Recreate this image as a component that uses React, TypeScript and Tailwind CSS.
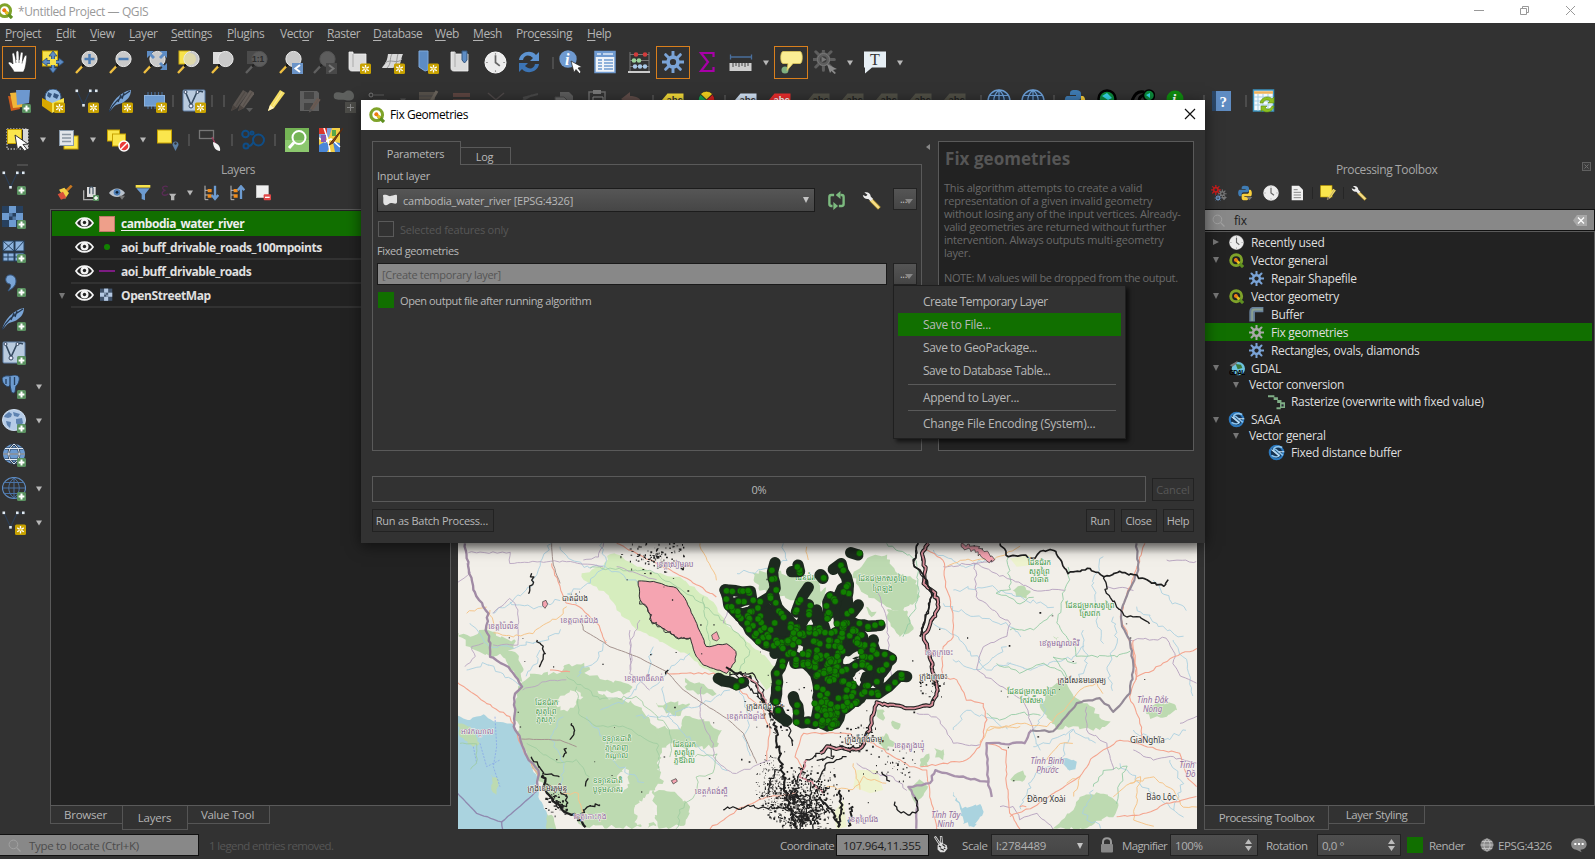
import type { ReactNode } from "react";

/* ---------- helpers ---------- */

type P = [number, number];

function rng(seed: number) {
  let s = seed % 2147483647;
  return () => ((s = (s * 48271) % 2147483647) / 2147483647);
}

const pts = (s: string): P[] => s.split(" ").map((p) => p.split(",").map(Number) as P);

function wobble(s: string, amp = 4, seed = 7, step = 12, close = false) {
  const list = pts(s);
  if (close) list.push(list[0]);
  const r = rng(seed + list[0][0] + 1);
  let d = `M${list[0][0]},${list[0][1]}`;
  for (let i = 1; i < list.length; i++) {
    const [x0, y0] = list[i - 1];
    const [x1, y1] = list[i];
    const n = Math.max(1, Math.round(Math.hypot(x1 - x0, y1 - y0) / step));
    for (let k = 1; k <= n; k++) {
      const j = k === n ? 0.4 : 1;
      const x = x0 + ((x1 - x0) * k) / n + (r() - 0.5) * amp * 2 * j;
      const y = y0 + ((y1 - y0) * k) / n + (r() - 0.5) * amp * 2 * j;
      d += `L${x.toFixed(1)},${y.toFixed(1)}`;
    }
  }
  return close ? d + "Z" : d;
}

function scatter(cx: number, cy: number, rx: number, ry: number, n: number, seed: number, size = 3) {
  const r = rng(seed);
  let d = "";
  for (let i = 0; i < n; i++) {
    const a = r() * Math.PI * 2;
    const q = r();
    const x = cx + Math.cos(a) * rx * q;
    const y = cy + Math.sin(a) * ry * q;
    const w = 1.5 + r() * size;
    d += `M${x.toFixed(1)},${y.toFixed(1)}h${w.toFixed(1)}v${(1.5 + r() * size).toFixed(1)}h${(-w).toFixed(1)}z`;
  }
  return d;
}

function inside([x, y]: P, poly: P[]) {
  let hit = false;
  for (let i = 0, j = poly.length - 1; i < poly.length; j = i++) {
    const [xi, yi] = poly[i];
    const [xj, yj] = poly[j];
    if (yi > y !== yj > y && x < ((xj - xi) * (y - yi)) / (yj - yi) + xi) hit = !hit;
  }
  return hit;
}

/* ---------- icons ---------- */

function Svg({ s = 24, children }: { s?: number; children: ReactNode }) {
  return (
    <svg width={s} height={s} viewBox="0 0 24 24" fill="none" className="shrink-0">
      {children}
    </svg>
  );
}

const Star = () => (
  <g>
    <rect x="13" y="13.5" width="11" height="10.5" rx="1.5" fill="#c8a200" />
    <path d="M18.5 15v7.5M15.2 16.9l6.6 3.8M21.8 16.9l-6.6 3.8" stroke="#fff" strokeWidth="1.3" />
    <circle cx="18.5" cy="18.8" r="1.2" fill="#e8c83a" />
  </g>
);
const Plus = () => (
  <g>
    <rect x="15" y="15" width="9" height="9" rx="1.5" fill="#5a9160" />
    <path d="M19.5 16.6v5.8M16.6 19.5h5.8" stroke="#fff" strokeWidth="2" />
  </g>
);
const Lens = ({ dim }: { dim?: boolean }) => (
  <g>
    <path d="M1 23L7.5 16" stroke={dim ? "#606060" : "#f0c040"} strokeWidth="2.4" />
    <path d="M7 16.5L10 13.5" stroke={dim ? "#222" : "#111"} strokeWidth="2.2" />
    <circle cx="14.5" cy="9" r="7.6" fill={dim ? "#5d5d5d" : "#c9c9c9"} stroke={dim ? "#555" : "#ececec"} strokeWidth="1" />
  </g>
);
const Gear = ({ c = "#7aa3d6", hole = "#323232" }: { c?: string; hole?: string }) => (
  <g>
    <path d="M12 .5v23M.5 12h23M4 4l16 16M20 4L4 20" stroke={c} strokeWidth="3.2" strokeLinecap="round" />
    <circle cx="12" cy="12" r="7.4" fill={c} />
    <circle cx="12" cy="12" r="3.4" fill={hole} />
  </g>
);
const QLogo = ({ s = 16 }: { s?: number }) => (
  <Svg s={s}>
    <circle cx="11.5" cy="11.5" r="8.8" stroke="#7fa32a" strokeWidth="4.6" />
    <path d="M14 14l8.5 8.5" stroke="#5f9020" strokeWidth="5" />
    <path d="M9.5 9.5l7 7" stroke="#e8c020" strokeWidth="4" />
    <circle cx="11" cy="11" r="3" fill="#ee7913" />
  </Svg>
);
const Clock = ({ s = 24 }: { s?: number }) => (
  <Svg s={s}>
    <circle cx="12" cy="12" r="11" fill="#ececec" stroke="#fff" />
    <path d="M12 4.5V12l4.5 3.5" stroke="#666" strokeWidth="1.8" />
    <path d="M12 2v2M12 20v2M2 12h2M20 12h2" stroke="#999" strokeWidth="1.2" />
  </Svg>
);
const Globe = ({ c = "#6da0d8" }: { c?: string }) => (
  <Svg>
    <circle cx="12" cy="12" r="11" fill="#26384e" stroke={c} strokeWidth="1.4" />
    <path d="M1 12h22M3 6.5h18M3 17.5h18M12 1c-7 6-7 16 0 22M12 1c7 6 7 16 0 22M12 1v22" stroke={c} strokeWidth="1.2" />
  </Svg>
);
const Wrench = ({ s = 22 }: { s?: number }) => (
  <Svg s={s}>
    <path d="M11 11l11 11" stroke="#a98b2d" strokeWidth="5" />
    <path d="M12 12l9.5 9.5" stroke="#f5dd86" strokeWidth="3.2" />
    <path d="M3 2c4-1.500 8 1 8 5l3 3-3 3-3-3c-3.500.5-6.500-1.500-7-5l4 1.700 2-2z" fill="#eee" />
  </Svg>
);
const VNodes = ({ badge }: { badge: ReactNode }) => (
  <Svg>
    <path d="M2 2l6.500 14L15 2h6" stroke="#2c3e55" strokeWidth="1.200" />
    <g fill="#dfe9f2">
      <rect x="0.500" y="0.500" width="2.600" height="2.600" />
      <rect x="14" y="0.500" width="2.600" height="2.600" />
      <rect x="20" y="0.500" width="2.600" height="2.600" />
      <rect x="7.200" y="15" width="2.600" height="2.600" />
    </g>
    {badge}
  </Svg>
);
const VBox = ({ badge }: { badge: ReactNode }) => (
  <Svg>
    <rect x="1" y="1" width="22" height="21" rx="1" fill="#b9cbdf" stroke="#5e7fa6" />
    <path d="M3.500 3l5.500 13 6-13c3-1.500 4-1 6 0" stroke="#34495f" strokeWidth="1.600" />
    <circle cx="9" cy="17" r="2" fill="#eef" stroke="#34495f" />
    <circle cx="3.500" cy="3" r="1.500" fill="#eef" stroke="#34495f" />
    <circle cx="15.500" cy="3" r="1.500" fill="#eef" stroke="#34495f" />
    {badge}
  </Svg>
);
const Feather = ({ badge }: { badge: ReactNode }) => (
  <Svg>
    <path d="M0 23C2 13 11 3 22 1c0 7-5 11-9 13-2 1-4 1-6 2-3 2-4 4-7 7z" fill="#7aa5d6" />
    <path d="M0 23C4 14 11 8 21 2M9 13l3-7M13 10l2-6" stroke="#24364c" strokeWidth="1.300" />
    {badge}
  </Svg>
);
const Tag = ({ bg, fg, dim }: { bg: string; fg: string; dim?: boolean }) => (
  <Svg>
    <path d="M1 11L6.500 4.500h16v13H6.500z" fill={bg} opacity={dim ? 0.55 : 1} />
    <text x="5.500" y="13.500" fontSize="9.500" fontWeight="700" fill={fg} fontFamily="Liberation Sans">
      abc
    </text>
  </Svg>
);
const Python = ({ s = 24, menu }: { s?: number; menu?: boolean }) => (
  <Svg s={s}>
    <path d="M12 1c-5 0-5 1.500-5 5h6v1H4c-3 0-3 9 0 10h3v-3c0-2 1-3 3-3h5c2 0 3-1 3-3V5c0-3-2-4-6-4z" fill="#3f7cb4" />
    <path d="M12 23c5 0 5-1.500 5-5h-6v-1h9c3 0 3-9 0-10h-2v3c0 2-1 3-3 3h-5c-2 0-3 1-3 3v3c0 3 1 4 5 4z" fill="#f8cf3c" />
    {menu && <path d="M14 18h9l-4.500 5z" fill="#777" />}
  </Svg>
);
const Page = ({ c = "#dcdcdc" }: { c?: string }) => (
  <path d="M2 2h4v2h13v17H5c-2 0-3-1-3-3z" fill={c} stroke="#f3f3f3" strokeWidth=".8" />
);
const Pencil = ({ a, b }: { a: string; b: string }) => (
  <g>
    <path d="M4 22l2-6L16 1l5 3L10 19z" fill={a} />
    <path d="M4 22l2-6 4 3z" fill={b} />
    <path d="M9 17L18 3" stroke={b} strokeWidth="1.200" opacity=".6" />
  </g>
);
const Eye = () => (
  <svg width="19" height="14" viewBox="0 0 19 14" fill="none" className="shrink-0">
    <path d="M1 7c4-6.500 13-6.500 17 0-4 6.500-13 6.500-17 0z" fill="#222" stroke="#f4f4f4" strokeWidth="1.700" />
    <circle cx="9.500" cy="6.500" r="4" fill="#f4f4f4" />
    <circle cx="9.500" cy="6.500" r="1.700" fill="#222" />
  </svg>
);
const Checker = ({ s = 24, badge, light }: { s?: number; badge?: ReactNode; light?: boolean }) => (
  <Svg s={s}>
    <rect width="21" height="21" x="0" y="1" fill={light ? "#41536b" : "#27405e"} />
    <g fill={light ? "#b4c8e2" : "#6d9bd0"}>
      <rect x="7" y="1" width="7" height="7" />
      <rect x="0" y="8" width="7" height="7" />
      <rect x="14" y="8" width="7" height="7" />
      <rect x="7" y="15" width="7" height="7" />
      <rect x="7" y="8" width="3.500" height="3.500" opacity=".6" />
      <rect x="10.500" y="11.500" width="3.500" height="3.500" opacity=".6" />
    </g>
    {badge}
  </Svg>
);
const Saga = () => (
  <Svg s={17}>
    <circle cx="12" cy="12" r="9.500" fill="#16324f" stroke="#2b78bd" strokeWidth="3" />
    <path d="M20 5c-6-3-13 0-12 4l8 7c-1 3-7 3-11 0M9 6l12 10" stroke="#8cc4ee" strokeWidth="2.200" />
    <path d="M15 11h8M5 8l11 9" stroke="#cfe6f7" strokeWidth="1.500" />
  </Svg>
);
const Search = ({ s = 14 }: { s?: number }) => (
  <Svg s={s}>
    <circle cx="10" cy="10" r="8" stroke="#a0a0a0" strokeWidth="1.800" />
    <path d="M16 16l7 7" stroke="#a0a0a0" strokeWidth="2.200" />
  </Svg>
);

const Slot = ({ children, on }: { children: ReactNode; on?: boolean }) => (
  <div className={on ? "flex h-[33px] w-[34px] shrink-0 items-center justify-center border border-[#d97f1c] pb-[2px]" : "flex h-[33px] w-[34px] shrink-0 items-center justify-center pb-[1px]"}>
    {children}
  </div>
);
const Drop = ({ dim }: { dim?: boolean }) => (
  <div className="flex w-4 shrink-0 items-center justify-center">
    <svg width="6" height="6" viewBox="0 0 6 6">
      <path d="M0 .5h6L3 5.500z" fill={dim ? "#555" : "#b8b8b8"} />
    </svg>
  </div>
);
const Bar = () => <div className="h-3 w-[2px] shrink-0 bg-[#4c4c4c]" />;

/* ---------- toolbars ---------- */

const menus: [string, string, string, string][] = [
  ["", "P", "roject", "w-[51px]"], ["", "E", "dit", "w-[34px]"], ["", "V", "iew", "w-[39px]"], ["", "L", "ayer", "w-[42px]"],
  ["", "S", "ettings", "w-[56px]"], ["", "P", "lugins", "w-[53px]"], ["Vect", "o", "r", "w-[47px]"], ["", "R", "aster", "w-[46px]"],
  ["", "D", "atabase", "w-[62px]"], ["", "W", "eb", "w-[38px]"], ["", "M", "esh", "w-[43px]"], ["Pro", "c", "essing", "w-[71px]"], ["", "H", "elp", "w-[40px]"],
];

function RowOne() {
  return (
    <div className="flex h-[33px] items-center pl-[2px]">
      <Slot on>
        <Svg>
          <path d="M7 22c-1-3-4-6-6-9 1-2 3-1 5 1L5 4c.5-1.800 2-1.500 2.500 0L9 10V2c.5-1.700 2.500-1.700 2.800 0l.4 8 1.300-7c.7-1.500 2.500-1 2.500.5l-.5 7.500 2-5c1-1.300 2.500-.5 2.300 1-.6 5-1 11-3.300 15z" fill="#fff" stroke="#222" strokeWidth=".6" />
          <path d="M8.500 10l.5 3M12 10v3M15.500 11l-.5 2.500" stroke="#777" strokeWidth=".9" />
        </Svg>
      </Slot>
      <Slot>
        <Svg>
          <rect x="1.500" y="1" width="15" height="15" fill="#f7e34c" stroke="#c8a200" />
          <path d="M12 1l4 5h-2.500v4.500H18V8l5 4-5 4v-2.500h-4.500V18H16l-4 5-4-5h2.500v-4.500H6V16l-5-4 5-4v2.500h4.500V6H8z" fill="#5d8cc4" stroke="#2b4c76" strokeWidth=".8" />
          <rect x="9" y="9" width="6" height="6" fill="#f7e34c" />
        </Svg>
      </Slot>
      <Slot><Svg><Lens /><path d="M14.500 4v10M9.500 9h10" stroke="#4c7db5" strokeWidth="2.500" /></Svg></Slot>
      <Slot><Svg><Lens /><path d="M9.500 9h10" stroke="#4c7db5" strokeWidth="2.500" /></Svg></Slot>
      <Slot><Svg><Lens /><path d="M4 1h7L8.500 3.500 12 7l-2 2-3.500-3.500L4 8zM24 1v7l-2.500-2.500L18 9l-2-2 3.500-3.500L17 1zM24 20h-7l2.500-2.500L16 14l2-2 3.500 3.500L24 13z" fill="#5d8cc4" /></Svg></Slot>
      <Slot><Svg><rect x="2" y="1" width="11" height="13" fill="#f7e34c" stroke="#d0ae10" /><Lens /><circle cx="13" cy="9" r="6" fill="#e8dfa0" opacity=".7" /></Svg></Slot>
      <Slot><Svg><rect x="2" y="2" width="11" height="12" fill="#ddd" /><Lens /></Svg></Slot>
      <Slot><Svg><rect x="2" y="1" width="10" height="13" fill="#4b4b4b" /><Lens dim /><text x="7" y="12" fontSize="8.500" fontWeight="700" fill="#2c2c2c" fontFamily="Liberation Sans">1:1</text></Svg></Slot>
      <Slot><Svg><Lens /><rect x="13" y="13" width="11" height="11" fill="#6b94c8" /><path d="M21 15l-4.500 3.500L21 22" stroke="#fff" strokeWidth="2" /></Svg></Slot>
      <Slot><Svg><Lens dim /><rect x="13" y="13" width="11" height="11" fill="#484848" /><path d="M16 15l4.500 3.500L16 22" stroke="#777" strokeWidth="2" /></Svg></Slot>
      <Slot><Svg><Page /><path d="M6 4v13" stroke="#aaa" /><Star /></Svg></Slot>
      <Slot><Svg><path d="M7 4h15c-2 4-2 10-5 14H1c1-3 5-4 6-14z" fill="#d8d8d8" /><path d="M4 13c6-5 12 2 17-4M11 4c-3 5 0 9-5 14M17 4c-2 6 0 9-5 14" stroke="#999" /><Star /></Svg></Slot>
      <Slot><Svg><path d="M4 1h9v19l-3 1-6-4z" fill="#5d8cc4" stroke="#7fa8da" /><Star /></Svg></Slot>
      <Slot><Svg><Page /><path d="M6 2v15" stroke="#aaa" /><path d="M13 1h5v9l-2.500 3L13 10z" fill="#5d8cc4" stroke="#35567f" /></Svg></Slot>
      <Slot><Clock s={23} /></Slot>
      <Slot><Svg><path d="M2 10C3 2 14-1 19 5l3-3v9h-9l3-3C12 4 7 5 6 10z" fill="#5d93d0" /><path d="M22 14c-1 8-12 11-17 5l-3 3v-9h9l-3 3c4 4 9 3 10-2z" fill="#3c74b4" /></Svg></Slot>
      <div className="flex w-2 justify-end"><Bar /></div>
      <Slot>
        <Svg><circle cx="9" cy="9" r="8.700" fill="#6f9ad0" /><text x="6" y="15" fontSize="16" fontStyle="italic" fontWeight="700" fill="#fff" fontFamily="Liberation Serif">i</text><path d="M12 11l11 6-4 1 3 4-1.500 1.500-3.500-4-2 3z" fill="#fff" stroke="#222" strokeWidth=".7" /></Svg>
      </Slot>
      <Slot><Svg><rect x="2" y="1.500" width="20" height="21" fill="#f0f4f9" stroke="#6f9ad0" strokeWidth="1.500" /><path d="M2 4.500h20" stroke="#6f9ad0" strokeWidth="5" /><path d="M4 4h4M10 4h10" stroke="#dfeaf6" strokeWidth="1.500" /><path d="M5 10h4M11 10h9M5 13h4M11 13h9M5 16h4M11 16h9M5 19h4M11 19h9" stroke="#6f9ad0" strokeWidth="1.500" /></Svg></Slot>
      <Slot>
        <Svg>
          <path d="M3 2v19M22 2v19M3 4.500h19M3 10.500h19M3 16.500h19" stroke="#777" />
          <path d="M1 22h22" stroke="#ddd" strokeWidth="1.800" />
          <g fill="#d23c3c"><circle cx="9" cy="4.500" r="2.300" /><circle cx="18" cy="4.500" r="2.300" /></g>
          <g fill="#9bd39b"><circle cx="7" cy="10.500" r="2.300" /><circle cx="12" cy="10.500" r="2.300" /></g>
          <g fill="#a9c9e8"><circle cx="8" cy="16.500" r="2.200" /><circle cx="13" cy="16.500" r="2.200" /><circle cx="18" cy="16.500" r="2.200" /></g>
        </Svg>
      </Slot>
      <Slot on><Svg s={22}><Gear /></Svg></Slot>
      <Slot><Svg><path d="M18.500 7V3H6l7 9-7 9h12.500v-4" stroke="#a800a8" strokeWidth="2.200" /></Svg></Slot>
      <Slot><Svg><path d="M1.500 7h21M1.500 4.500v5M22.500 4.500v5" stroke="#4a6f9c" strokeWidth="1.300" /><rect x="0.500" y="13" width="22" height="8" fill="#cfcfcf" /><path d="M4 13v4M7 13v3M10 13v4M13 13v3M16 13v4M19 13v3" stroke="#444" /></Svg></Slot>
      <Drop />
      <Slot on><Svg><circle cx="6" cy="20" r="3.500" fill="#7fb080" /><path d="M4 1.500h17c3 0 3 12 0 12h-7l-6 7 1-7H4c-3 0-3-12 0-12z" fill="#fbee94" stroke="#e0c95c" strokeWidth=".8" /></Svg></Slot>
      <Slot><Svg><g transform="translate(-1 -2) scale(.95)"><Gear c="#5e5e5e" hole="#3d3d3d" /></g><circle cx="10.500" cy="9.500" r="6" stroke="#777" /><path d="M8.500 6.500l5 3-5 3z" fill="#777" /><path d="M14 14l10 5-4 1 3 3-1.500 1-3-3-1.500 2z" fill="#8a8a8a" /></Svg></Slot>
      <Drop />
      <Slot><Svg><path d="M1 1.500h22v16H9l-7 6v-6H1z" fill="#e6eef4" /><text x="7" y="15" fontSize="16" fill="#333" fontFamily="Liberation Serif">T</text></Svg></Slot>
      <Drop />
    </div>
  );
}

function RowTwo() {
  return (
    <div className="mt-[4px] flex h-9 items-center pl-[2px]">
      <Slot><Svg><path d="M1 7l10 1 2 12-9 2z" fill="#c85a1c" /><path d="M3 4l11-1 2 15-10 1z" fill="#f0b63a" /><path d="M9 1h14l-1 13-12 2z" fill="#6d98cf" /><Plus /></Svg></Slot>
      <Slot><Svg><circle cx="12" cy="8" r="8" fill="#9cc0e4" stroke="#35567f" /><path d="M7 3l4 2-2 4-3-2zM13 4l5 2-2 4-4-2z" fill="#35567f" /><path d="M1 9l10 5v10L1 17z" fill="#d8a800" /><path d="M11 14l12-5v9l-12 6z" fill="#f7e34c" /><Star /></Svg></Slot>
      <Slot><VNodes badge={<Star />} /></Slot>
      <Slot><Feather badge={<Star />} /></Slot>
      <Slot><Svg><path d="M5 3v3M8.500 3v3M12 3v3M15.500 3v3M19 3v3M5 17v3M8.500 17v3M12 17v3" stroke="#4a6c94" strokeWidth="1.200" /><rect x="1.500" y="6.500" width="20" height="10.500" fill="#6d9bd0" stroke="#8db3de" /><Star /></Svg></Slot>
      <div className="w-[5px]"><Bar /></div>
      <Slot><VBox badge={<Star />} /></Slot>
      <div className="flex w-[14px] justify-between"><Bar /><Bar /></div>
      <Slot><Svg><g transform="translate(-3 0)"><Pencil a="#5a5450" b="#48423e" /></g><g transform="translate(4 0)"><Pencil a="#635c57" b="#4c4541" /></g><path d="M16 19h7l-3.500 4z" fill="#5a5a5a" /></Svg></Slot>
      <Slot><Svg><Pencil a="#f5de62" b="#fff3c0" /></Svg></Slot>
      <Slot><Svg><path d="M2 2h17l2 2v18H2z" fill="#5e5e5e" /><path d="M6 3h10v7H6zM6 14h9v7H6z" fill="#444" /><g transform="translate(8 8) scale(.7)"><Pencil a="#6a5a52" b="#555" /></g></Svg></Slot>
      <Slot><Svg><path d="M2 5c4-4 8 1 11-2s9-1 9 4-5 5-9 4-13 2-11-6z" fill="#5e605e" /><rect x="13" y="13" width="11" height="11" fill="#4c4c48" /><path d="M18.500 15v7M15 18.500h7" stroke="#888" /></Svg></Slot>
      <Slot><Svg><circle cx="5" cy="6" r="2" stroke="#777" /><path d="M8 6h10M7 11h14" stroke="#5a5a5a" /></Svg></Slot>
      <Drop dim />
      <Slot><Svg><rect x="3" y="3" width="16" height="17" fill="#56514a" /><path d="M3 7h16M3 11h16" stroke="#444" /><path d="M14 14L21 2" stroke="#6a645c" strokeWidth="3" /></Svg></Slot>
      <Slot><Svg><rect x="3" y="4" width="17" height="4" fill="#5c4440" /><rect x="3" y="10" width="17" height="4" fill="#5c4440" /></Svg></Slot>
      <Slot><Svg><path d="M4 4l14 12M20 4L8 14" stroke="#4e4848" strokeWidth="1.500" /></Svg></Slot>
      <Slot><Svg><path d="M5 9l15-4M4 12l10-6" stroke="#484848" strokeWidth="2" /></Svg></Slot>
      <Slot><Svg><path d="M8 3h9l4 4v9H8z" fill="#5c5c5c" /><path d="M3 8h9l3 3v10H3z" fill="#6a6a6a" stroke="#444" /></Svg></Slot>
      <Slot><Svg><path d="M3 3h16v19H3z" stroke="#6a6a6a" strokeWidth="1.500" /><path d="M7 1h8v4H7z" fill="#777" /><path d="M7 8h10v9H7z" stroke="#888" /></Svg></Slot>
      <Slot><Svg><path d="M1 10l9-7v4c6 0 11 2 12 8-4-3-8-3-12-3v4z" fill="#5f4c48" /></Svg></Slot>
      <div className="flex w-[7px] justify-center"><Bar /></div>
      <Slot><Tag bg="#f0d838" fg="#333" /></Slot>
      <Slot><Svg><path d="M12 12L6 6a8 8 0 0 1 12 0z" transform="translate(-.5 -1)" fill="#f2cf1d" stroke="#222" strokeWidth=".6" /><path d="M11.500 11L5.500 5.500a9 9 0 0 0 0 12z" fill="#18a050" stroke="#222" strokeWidth=".6" /><path d="M11.500 11l6-5.500a9 9 0 0 1 0 12z" fill="#d32020" stroke="#222" strokeWidth=".6" /></Svg></Slot>
      <div className="w-[5px]"><Bar /></div>
      <Slot><Tag bg="#cfe0f4" fg="#333" /></Slot>
      <Slot><Tag bg="#e82c2c" fg="#fff" /></Slot>
      <div className="w-[5px]" />
      {[0, 1, 2, 3, 4].map((i) => (
        <Slot key={i}><Tag bg="#6b6a58" fg="#222" dim /></Slot>
      ))}
      <div className="flex w-[10px] justify-end"><Bar /></div>
      <Slot><Globe /></Slot>
      <Slot><Globe /></Slot>
      <div className="flex w-[8px] justify-center"><Bar /></div>
      <Slot><Python /></Slot>
      <Slot><Svg><circle cx="10" cy="10" r="8.500" fill="#0d8a3c" stroke="#000" strokeWidth="2.500" /><path d="M5 7l5-3 5 5-4 2z" fill="#35d7e8" /></Svg></Slot>
      <Slot><Svg><path d="M1 12C4 3 9 2 13 3M8 12c0-3 2-5 5-6" stroke="#000" strokeWidth="3" /><circle cx="18" cy="6.500" r="5.500" fill="#0d8a3c" stroke="#000" strokeWidth="1.500" /><path d="M15 6l4-2v5z" fill="#35d7e8" /></Svg></Slot>
      <Slot><Svg><circle cx="10" cy="10" r="8.500" fill="#0f8c0f" /><text x="7" y="15" fontSize="15" fontStyle="italic" fontWeight="700" fill="#fff" fontFamily="Liberation Serif">i</text></Svg></Slot>
      <div className="flex w-[11px] justify-end"><Bar /></div>
      <Slot><Svg><rect x="2" y="2" width="19" height="20" fill="#5f8cc2" /><rect x="2" y="2" width="4" height="20" fill="#2b4666" /><text x="9.500" y="17.500" fontSize="15" fontWeight="700" fill="#fff" fontFamily="Liberation Serif">?</text></Svg></Slot>
      <div className="flex w-[8px] justify-end"><Bar /></div>
      <Slot><Svg><rect x="1.500" y="1" width="20" height="21" fill="#f4fafd" stroke="#3b93be" strokeWidth="1.500" /><path d="M2 3.500h19" stroke="#f0b35b" strokeWidth="2.500" /><path d="M2 8h19M2 12h19M2 16h19M6 5v17M11 5v17M16 5v17" stroke="#a8cfe4" /><path d="M8 14c1-6 9-8 12-4l2-2v6h-6l2-2c-3-2-6-1-7 2zM22 17c-1 6-8 8-12 4l-1 2v-6h6l-2 2c3 2 6 1 7-2z" fill="#8cc020" stroke="#5b8b10" strokeWidth=".6" /></Svg></Slot>
    </div>
  );
}

function RowThree() {
  return (
    <div className="mt-[3px] flex h-9 items-center pl-[1px]">
      <Slot><Svg><rect x="1" y="1" width="21" height="20" stroke="#eee" strokeDasharray="1.500 1.500" /><rect x="17" y="1" width="5" height="20" fill="#d8d8d8" /><rect x="1.500" y="1.500" width="14" height="14" fill="#fbe64d" stroke="#c8a200" /><path d="M9 7l13 9-5 .5 4 5-2.500 1.500-4-5-3 4z" fill="#fff" stroke="#333" /></Svg></Slot>
      <Drop />
      <Slot><Svg><rect x="8" y="8" width="14" height="13" fill="#fbe64d" stroke="#c8a200" /><rect x="3.500" y="2.500" width="14" height="15" fill="#e2e6ea" stroke="#8899aa" /><path d="M6 6.500h9M6 10h9M6 13.500h9" stroke="#8b97a3" strokeWidth="1.500" /></Svg></Slot>
      <Drop />
      <Slot><Svg><rect x="1.500" y="2" width="12" height="11" fill="#fbe64d" stroke="#c8a200" /><rect x="6.500" y="6" width="13" height="12" fill="#fbe64d" stroke="#c8a200" /><circle cx="18" cy="18" r="5" fill="#e83a3a" stroke="#fff" strokeWidth="1.500" /><path d="M15 21l6-6" stroke="#fff" strokeWidth="1.500" /></Svg></Slot>
      <Drop />
      <Slot><Svg><rect x="1.500" y="2" width="14" height="13" fill="#fbe64d" stroke="#c8a200" /><path d="M19.500 23l-3-6a3 3.500 0 1 1 6 0z" fill="#5b7fa4" /><circle cx="19.500" cy="15.500" r="1.200" fill="#323232" /></Svg></Slot>
      <div className="flex w-[8px] justify-center"><Bar /></div>
      <Slot><Svg><rect x="1.500" y="2.500" width="14" height="8" stroke="#777" strokeWidth="1.300" /><path d="M14 9l3 6" stroke="#a03a5c" strokeWidth="1.200" /><path d="M15 14c4 1 8 4 7 9-4 0-7-4-7-9z" fill="#f4f4f4" /></Svg></Slot>
      <div className="flex w-[9px] justify-center"><Bar /></div>
      <Slot><Svg><g stroke="#0f4d86" strokeWidth="2"><circle cx="4.500" cy="6" r="3.300" /><circle cx="17.500" cy="12" r="5.500" /><circle cx="5" cy="18" r="2.500" /><circle cx="11" cy="5" r="1.500" /><path d="M8 18c3 0 3-3 5-4" /></g></Svg></Slot>
      <div className="flex w-[10px] justify-center"><Bar /></div>
      <Slot><Svg><rect width="24" height="24" fill="#74b455" /><rect y="12" width="24" height="12" fill="#8cc86e" /><circle cx="14" cy="9.500" r="6.500" stroke="#fff" strokeWidth="2" /><path d="M9 14.500L4 20" stroke="#fff" strokeWidth="3" /></Svg></Slot>
      <Slot><Svg><rect width="21" height="24" fill="#f3cf45" /><path d="M0 0h8v6H0z" fill="#d9372b" /><path d="M8 0h5l-3 9-6 3-4-3V6h8z" fill="#7da0d8" /><path d="M0 17l7-4 4 6-3 5H0zM14 14l7 1v9h-5z" fill="#4a87d8" /><path d="M0 10l6 4 6-3 9 8M5 0l4 12 2 12" stroke="#fff" strokeWidth="1.500" /><path d="M2 7h5v7H2z" fill="#8a5bb0" /><path d="M13 2h4v6h-4z" fill="#5aa849" /><path d="M24 0L13 13l-3 4 4-2z" fill="#8a4a1c" stroke="#5d2c0c" /></Svg></Slot>
    </div>
  );
}

function SideTools() {
  const items: [ReactNode, boolean][] = [
    [<VNodes badge={<Plus />} />, false],
    [<Checker badge={<Plus />} />, false],
    [<Svg><g fill="#8db3de" stroke="#24405f"><rect x="1" y="2" width="11" height="10" /><rect x="13" y="2" width="9" height="10" /><rect x="1" y="14" width="11" height="8" /><rect x="13" y="14" width="9" height="8" /></g><path d="M1 2l11 10M12 2L1 12M13 12l9-10M1 18h21M6 14v8" stroke="#24405f" /><Plus /></Svg>, false],
    [<Svg><path d="M4 5c1-5 10-4 10 3 0 5-4 8-8 10 3-4 3-6 2-7-3 0-5-3-4-6z" fill="#7aa5d6" stroke="#35567f" /><Plus /></Svg>, false],
    [<Feather badge={<Plus />} />, false],
    [<VBox badge={<Plus />} />, false],
    [<Svg><path d="M0 3c3-3 6-2 8-2 3-1 7-2 9 1 1 3-1 8-3 9l-1 6c-1 2-4 1-4-2l-1-5c-1 2-2 2-4 1C1 9 0 6 0 3z" fill="#6d9bd0" stroke="#26405f" /><path d="M8 2v8M12.500 2v8M4 4v5" stroke="#26405f" strokeWidth="1.300" /><Plus /></Svg>, true],
    [<Svg><ellipse cx="12" cy="11" rx="11.500" ry="10.500" fill="#b5cbe6" stroke="#cfdff0" /><path d="M3 6l4-3 3 2-1 3-3 1-4-1zM11 3l7 2-2 3-4-1zM4 12l5 1-1 6-3-3zM14 10l6-1 1 5-4 4-3-4z" fill="#5d82b0" /><Plus /></Svg>, true],
    [<Svg><ellipse cx="12" cy="11" rx="11" ry="10" fill="#6d9bd0" /><path d="M1 11h22M3 5.500h18M3 16.500h18M12 1c-7 5-7 15 0 20M12 1c7 5 7 15 0 20" stroke="#24364c" strokeWidth="2.200" /><path d="M1 11h22M3 5.500h18M3 16.500h18M12 1c-7 5-7 15 0 20M12 1c7 5 7 15 0 20" stroke="#e6eef6" strokeWidth="1" /><Plus /></Svg>, false],
    [<Svg><ellipse cx="12" cy="11" rx="11.500" ry="10.500" stroke="#5d8cc4" strokeWidth="1.200" /><path d="M1 11h22M3 5.500h18M3 16.500h18M12 1c-7 5-7 15 0 20M12 1c7 5 7 15 0 20M12 1v20" stroke="#4a73a5" /><Plus /></Svg>, true],
    [<VNodes badge={<Star />} />, true],
  ];
  return (
    <div className="flex w-[50px] shrink-0 flex-col pt-[6px]">
      <div className="ml-[17px] h-[2px] w-[11px] bg-[#4c4c4c]" />
      {items.map(([icon, drop], i) => (
        <div key={i} className="flex h-[34px] shrink-0 items-center pl-[2px]">
          {icon}
          {drop && <div className="pl-[5px]"><Drop /></div>}
        </div>
      ))}
    </div>
  );
}

/* ---------- docks ---------- */

function LayersDock() {
  const rows: [string, ReactNode, string][] = [
    ["cambodia_water_river", <div className="h-4 w-4 border border-[#c0786a] bg-[#ee9f8a]" />, "tracking-[-0.46px]"],
    ["aoi_buff_drivable_roads_100mpoints", <div className="h-[6px] w-[6px] rounded-full bg-[#118000]" />, "tracking-[-0.44px]"],
    ["aoi_buff_drivable_roads", <div className="h-[2px] w-4 bg-[#7d1c82]" />, "tracking-[-0.46px]"],
    ["OpenStreetMap", <Checker s={14} light />, "tracking-[-0.4px]"],
  ];
  return (
    <div className="flex w-[401px] shrink-0 flex-col">
      <div className="h-[24px] pl-[171px] pt-[3px] text-[12px] leading-[18px] tracking-[-0.35px] text-[#a6a6a6]">Layers</div>
      <div className="flex h-[22px] items-center gap-[10px] pl-[7px]">
        <Svg s={16}><path d="M13 10l9-9" stroke="#c87820" strokeWidth="4" /><path d="M3 7l8-3 7 8-6 9z" fill="#f3cf45" /><path d="M1 14l8-4 5 9-8 3z" fill="#d9503b" /></Svg>
        <Svg s={16}><path d="M1 8v14h14" stroke="#aaa" strokeWidth="2" /><rect x="6" y="3" width="13" height="15" fill="#ddd" /><path d="M10 13V5c0-3 5-3 5 0v9" stroke="#456" strokeWidth="1.800" /><Plus /></Svg>
        <Svg s={16}><path d="M0 12C6 3 18 3 24 12c-6 8-18 8-24 0z" fill="#b9c2cc" /><circle cx="12" cy="11" r="5" fill="#4d7fb8" /><circle cx="12" cy="11" r="2" fill="#123" /><path d="M15 16h9l-4.500 6z" fill="#777" /></Svg>
        <Svg s={16}><path d="M1 2h22" stroke="#f7e34c" strokeWidth="4" /><path d="M2 5h20l-7 9v9l-5-2v-7z" fill="#6d9bd0" /></Svg>
        <Svg s={16}><path d="M10 3C6 0 1 3 3 6c1 1.500 3 2 4 2C2 8 0 14 4 15c3 1 6-1 7-2" stroke="#5a2c56" strokeWidth="2" /><path d="M12 13h11l-3 4v6h-5v-6z" fill="#b5b5b5" /></Svg>
        <div className="-mx-[8px] flex w-[22px] justify-center"><Drop /></div>
        <Svg s={16}><path d="M3 1v21h5M3 8h5M3 15h5" stroke="#bbb" strokeWidth="1.500" /><path d="M7 6h6v5H7zM7 14h6v5H7z" fill="#f08c1c" /><path d="M18 1v19M13 15l5 6 5-6" stroke="#6d9bd0" strokeWidth="3.500" /></Svg>
        <Svg s={16}><path d="M3 1v21h5M3 8h5M3 15h5" stroke="#bbb" strokeWidth="1.500" /><path d="M7 6h6v5H7zM7 14h6v5H7z" fill="#f08c1c" /><path d="M18 21V3M13 8l5-6 5 6" stroke="#6d9bd0" strokeWidth="3.500" /></Svg>
        <Svg s={16}><rect x="2" y="1" width="18" height="18" fill="#f0f0f0" stroke="#ccc" /><rect x="13" y="14" width="11" height="9" rx="1.500" fill="#e04848" /><path d="M15 18.500h7" stroke="#fff" strokeWidth="2" /></Svg>
      </div>
      <div className="mt-[5px] flex h-[597px] flex-col border border-[#5a5a5a] bg-[#222] p-px">
        {rows.map(([name, swatch, track], i) => (
          <div key={name} className={i === 0 ? "flex h-[25px] shrink-0 items-stretch bg-[#116f00]" : "flex h-[24px] shrink-0 items-stretch"}>
            <div className="flex w-[19px] items-center justify-center">{i === 3 && <svg width="6" height="6"><path d="M0 0h6L3 6z" fill="#777" /></svg>}</div>
            <div className={i === 0 ? "flex grow items-center" : "flex grow items-center border-b-2 border-[#323232]"}>
              <div className="flex w-[26px] justify-center pb-[1px]"><Eye /></div>
              <div className="flex w-[20px] justify-center">{swatch}</div>
              <div className={i === 0 ? `pl-[4px] text-[12px] font-bold ${track} text-[#eee] underline underline-offset-2` : `pl-[4px] pt-[2px] text-[12px] font-bold ${track} text-[#e0e0e0]`}>{name}</div>
            </div>
          </div>
        ))}
      </div>
      <div className="flex items-start text-[11.500px] tracking-[-0.25px] text-[#b4b4b4]">
        <div className="flex h-[18px] w-[73px] items-center justify-center border border-t-0 border-[#555] pr-[2px]">Browser</div>
        <div className="-ml-px flex h-[24px] w-[66px] items-center justify-center border border-t-0 border-[#555] pr-[1px]">Layers</div>
        <div className="-ml-px flex h-[18px] w-[83px] items-center justify-center border border-t-0 border-[#555] pr-[2px]">Value Tool</div>
      </div>
    </div>
  );
}

type TreeRow = { h: string; pad: string; icon: ReactNode; text: string; arrow?: "d" | "r"; on?: boolean };

function ToolboxDock() {
  const gear = <Svg s={15}><Gear c="#7aa3d6" hole="#222" /></Svg>;
  const rows: TreeRow[] = [
    { h: "h-[18px]", pad: "pl-[5px]", icon: <Clock s={15} />, text: "Recently used", arrow: "r" },
    { h: "h-[18px]", pad: "pl-[5px]", icon: <QLogo s={15} />, text: "Vector general", arrow: "d" },
    { h: "h-[18px]", pad: "pl-[25px]", icon: gear, text: "Repair Shapefile" },
    { h: "h-[18px]", pad: "pl-[5px]", icon: <QLogo s={15} />, text: "Vector geometry", arrow: "d" },
    { h: "h-[18px]", pad: "pl-[25px]", icon: <Svg s={15}><path d="M5 23V8c0-3 1-4 4-4h14" stroke="#67809a" strokeWidth="9" /><path d="M5 22V8c0-3 1-4 4-4h13" stroke="#8a9f90" strokeWidth="3" /></Svg>, text: "Buffer" },
    { h: "h-[18px]", pad: "pl-[25px]", icon: <Svg s={15}><Gear c="#a9a9a9" hole="#116f00" /></Svg>, text: "Fix geometries", on: true },
    { h: "h-[18px]", pad: "pl-[25px]", icon: gear, text: "Rectangles, ovals, diamonds" },
    { h: "h-[18px]", pad: "pl-[5px]", icon: <Svg s={16}><circle cx="14" cy="13" r="10" fill="#6cc3de" /><path d="M10 6l8 1 2 5-7 2z" fill="#3c7a3c" /><path d="M1 8l7-4 5-3-2 5-6 4z" fill="#777" /><text x="0" y="23" fontSize="10" fontWeight="700" fill="#000" fontFamily="Liberation Sans" textLength="24">GDAL</text></Svg>, text: "GDAL", arrow: "d" },
    { h: "h-[15px]", pad: "pl-[25px]", icon: null, text: "Vector conversion", arrow: "d" },
    { h: "h-[19px]", pad: "pl-[45px]", icon: <Svg s={17}><path d="M0 3h9v3H0zM8 6h6v4H8zM13 10h6v4h-6zM17 13h7v8h-7zM12 20h6v3h-6z" fill="#7fae86" /><path d="M19 16h3v3h-3z" fill="#223" /></Svg>, text: "Rasterize (overwrite with fixed value)" },
    { h: "h-[17px]", pad: "pl-[5px]", icon: <Saga />, text: "SAGA", arrow: "d" },
    { h: "h-[15px]", pad: "pl-[25px]", icon: null, text: "Vector general", arrow: "d" },
    { h: "h-[19px]", pad: "pl-[45px]", icon: <Saga />, text: "Fixed distance buffer" },
  ];
  return (
    <div className="flex w-[391px] shrink-0 flex-col">
      <div className="flex h-[24px] items-start justify-between pl-[132px] pr-[4px] pt-[3px] text-[12px] leading-[18px] tracking-[-0.38px] text-[#a6a6a6]">
        <span>Processing Toolbox</span>
        <div className="mt-[1px] flex h-[9px] w-[9px] items-center justify-center border border-[#606060] bg-[#3c3c3c]">
          <svg width="5" height="5" viewBox="0 0 5 5"><path d="M.5.5l4 4M4.500.5l-4 4" stroke="#707070" /></svg>
        </div>
      </div>
      <div className="flex h-[22px] items-center pl-[7px]">
        <div className="flex gap-[10px]">
          <Svg s={16}><g transform="scale(.6)"><Gear c="#c81c1c" /></g><g transform="translate(11 7) scale(.5)"><Gear c="#777" /></g><g transform="translate(6 15) scale(.38)"><Gear c="#6d9bd0" /></g><path d="M15 18h9l-4.500 5z" fill="#777" /></Svg>
          <Python s={16} menu />
          <Clock s={16} />
          <Svg s={16}><path d="M4 1h11l6 6v16H4z" fill="#f0f0f0" /><path d="M7 7h6M7 11h11M7 15h11M7 19h11" stroke="#888" strokeWidth="1.500" /></Svg>
        </div>
        <div className="ml-[7px] h-3 w-px bg-[#262626]" />
        <div className="ml-[7px]"><Svg s={16}><rect x="1" y="1" width="17" height="17" fill="#fbe64d" stroke="#c8a200" /><g transform="translate(7 5) scale(.8)"><Pencil a="#f5de62" b="#766" /></g></Svg></div>
        <div className="ml-[7px] mr-[7px] h-3 w-px bg-[#262626]" />
        <Wrench s={16} />
      </div>
      <div className="mt-[5px] flex h-[22px] items-center border border-[#111] bg-[#888] pl-[7px] pr-[7px] text-[12px] text-[#1c1c1c]">
        <Search s={13} />
        <span className="grow pl-[9px] pt-[2px] tracking-[-0.2px]">fix</span>
        <svg width="14" height="11" viewBox="0 0 14 11"><path d="M4 0h10v11H4L0 5.500z" fill="#a8a8a8" /><path d="M5 2.500l6 6M11 2.500l-6 6" stroke="#fff" strokeWidth="1.300" /></svg>
      </div>
      <div className="h-[575px] border border-[#5a5a5a] bg-[#222] pt-[1px] text-[12px] tracking-[-0.32px] text-[#dedede]">
        {rows.map((r, i) => (
          <div key={i} className={r.on ? "mr-[2px] bg-[#116f00]" : ""}>
            <div className={`flex items-center ${r.h} ${r.pad} whitespace-nowrap`}>
              <div className="flex w-[12px] shrink-0 items-center justify-center">
                {r.arrow === "d" && <svg width="6" height="6"><path d="M0 0h6L3 6z" fill="#777" /></svg>}
                {r.arrow === "r" && <svg width="6" height="6"><path d="M0 0v6l6-3z" fill="#777" /></svg>}
              </div>
              {r.icon ? <div className="flex w-[29px] shrink-0 justify-center">{r.icon}</div> : <div className="w-[7px]" />}
              <span className="pt-px">{r.text}</span>
            </div>
          </div>
        ))}
      </div>
      <div className="flex items-start text-[11.500px] tracking-[-0.45px] text-[#b4b4b4]">
        <div className="flex h-[24px] w-[125px] items-center justify-center border border-t-0 border-[#555]">Processing Toolbox</div>
        <div className="-ml-px flex h-[18px] w-[97px] items-center justify-center border border-t-0 border-[#555]">Layer Styling</div>
      </div>
    </div>
  );
}

/* ---------- map ---------- */

const parks = [
  "23,310 60,320 110,290 150,320 195,330 190,360 150,370 120,380 60,350",
  "185,420 160,380 110,370 150,350 200,370 215,400 215,470",
  "205,480 240,430 330,430 350,410 400,430 380,470 330,510 300,540 260,480 350,440 400,430 470,450 550,470 530,490 440,480 470,500 520,510 570,530 600,580 650,640 620,700 640,760 600,780 590,850 620,890 400,890 300,800 265,740 230,680 205,600 195,550",
  "610,780 680,790 720,830 700,890 620,890",
  "620,590 690,600 700,560 760,570 815,600 800,650 700,655 660,640 630,650",
  "620,520 720,520 690,555 650,550",
  "705,445 770,470 800,490 760,495 710,480",
  "340,410 400,400 420,420 370,440",
  "905,130 980,120 1060,150 1100,140 1110,210 1020,210 930,180",
  "1060,210 1130,170 1110,230",
];
const parksB = [
  "100,130 150,80 200,75 230,130 290,150 300,200 250,245 200,230 130,190",
  "200,240 260,240 280,300 240,320 210,280", "140,230 170,245 155,260",
  "580,180 605,168 630,180 620,205 590,200",
  "660,530 690,470 730,450 760,500 800,520 840,560 870,575 840,600 760,590 710,595 680,560",
  "980,540 1010,520 1060,520 1070,540 1040,560 990,565",
  "170,630 200,610 225,640 200,660", "215,575 240,580 235,600 215,590", "170,540 195,545 190,570 170,560",
  "265,780 300,750 325,770 300,810 290,825", "300,690 330,670 325,710 300,710", "345,655 370,660 370,690 345,680",
  "700,897 760,840 780,800 850,790 895,820 880,860 830,870 800,897",
  "570,750 610,720 615,750 580,755", "700,320 720,320 710,335",
];
const blues = [
  "305,40 270,100 240,170 190,215 130,250", "455,40 465,110 400,170 350,190 380,220", "330,50 370,90 400,110 460,110 540,150 580,160",
  "180,215 250,235 330,210", "470,330 440,390 410,410 380,440", "640,470 655,560 700,610 780,680 830,720", "840,480 760,520 650,560 560,560",
  "60,280 120,350 200,350 280,330 330,300", "270,360 260,400 230,440", "610,350 590,440 520,520 450,540", "870,480 900,560 880,620 900,680",
  "410,560 470,640 500,700 580,760", "340,560 300,620 340,700 330,780", "1000,40 1010,90 960,120 860,130", "50,420 100,400 160,430 220,470", "720,370 660,420 600,480",
];
const bluesB = [
  "370,220 460,260 560,280 600,320", "340,280 420,330 500,420 570,400", "400,180 500,170 560,190 650,220 700,230", "560,400 640,420 760,380 790,350",
  "400,600 440,540 500,560 560,600", "760,600 720,690 640,740 600,840", "850,80 820,160 830,260 850,340", "880,260 890,340 860,420 880,480",
  "1000,150 1060,220 1100,240", "950,230 1010,280 1090,320", "790,300 800,400 770,460", "640,650 690,640 760,600 830,640", "900,700 960,760 1010,800 1090,860",
  "560,350 480,420 400,390", "820,780 790,850 840,897", "620,490 680,540 640,600 660,660", "940,600 1020,640 1100,600", "340,60 430,110 500,90", "1060,330 1100,400 1120,500",
  "1050,690 1090,760 1060,840",
];
const purples = [
  "55,68 180,68 180,100 270,95 360,95 460,110", "130,250 180,205 205,240 205,345 130,345", "500,110 560,130 620,150", "400,90 445,80 460,40",
  "218,480 300,450 350,450", "540,300 545,390 540,430 600,480", "755,470 750,560 790,640 790,680 830,720 860,730", "45,410 75,380 65,350 100,340",
  "570,270 540,340 540,420", "20,160 60,130 50,100", "820,280 840,230 870,180", "860,730 910,710 960,690",
];
const purplesB = [
  "370,110 460,100 530,130 640,180 735,182", "465,100 470,200 570,280 560,320 490,350 470,420 560,480 610,510 640,600", "460,100 520,95",
  "210,370 200,260 170,180", "210,370 215,440", "800,530 800,600 860,640 880,720", "930,330 1040,325 1065,370 1060,400 1080,440 1130,460",
  "290,550 350,560 370,590 400,640 480,645", "110,700 160,730 220,740 260,780", "1080,580 1130,560", "940,660 1000,690 1060,680 1130,700",
  "540,830 580,830 600,870 650,850 700,897", "1040,90 1130,95", "860,170 940,180",
];
const reds = [
  "23,458 110,520 180,560 212,640 235,690 265,740", "305,100 340,200 350,220 390,230 440,280 470,340", "500,40 600,90 700,140 800,200",
  "650,430 790,430 870,480 940,540 960,600 950,690", "780,897 860,840 950,800 1040,790", "1130,610 1060,610 1035,680 1060,720", "300,420 360,425",
];
const redsB = [
  "310,50 370,90 380,180 400,250 400,320 370,350 365,440 410,450 440,510 490,520", "490,520 500,570 480,650 440,690 370,700 300,710", "0,610 80,610 160,640 220,680 270,710 320,720 330,800 350,897",
  "500,640 560,660 560,760 570,850 600,897", "570,860 640,830 700,790 780,740 820,680 900,630 950,640 1020,660 1080,670 1100,740 1130,770",
  "950,440 1000,420 1060,380 1130,355", "975,40 945,130 900,260 940,360 950,440 930,500 960,580 970,640", "890,860 980,850 1040,820 1130,800", "600,830 620,830", "940,330 950,450",
];
const oranges = [
  "350,230 330,260 290,280 250,310 190,320 130,310", "750,40 760,70 800,150", "120,240 130,290", "330,790 385,790 400,860", "1070,50 1075,90", "50,250 110,230",
];
const orangesB = [
  "380,110 420,90 520,90 600,50", "500,600 590,580 680,590 740,530 780,480 830,460 850,490", "20,770 100,780 130,740 200,760", "740,760 780,740 760,800",
  "930,760 1000,740 1060,780 1090,830 1130,830", "100,700 120,780", "480,640 510,590 600,590", "680,690 720,640 760,640", "880,800 960,740 940,870 1000,890",
];
const greens = [
  "420,115 600,120 760,220 880,330 900,370 870,420", "380,470 390,560 440,590 520,590 620,640 630,720", "735,680 800,670 790,730 740,740 740,790 690,840 680,897",
  "350,440 450,510 560,500 660,600 660,680", "230,640 330,700 380,690 420,740", "760,200 780,350 840,400", "30,640 80,640 80,700 60,720",
];
const greensB = [
  "565,80 570,180 530,190 600,220 640,200", "735,182 750,150 745,110", "735,182 710,280 760,340 770,380 890,380 930,365", "570,300 640,300 700,250",
  "530,400 600,430 670,400 740,440 700,380 770,400", "500,550 540,570 600,550 660,555", "200,40 290,90 295,200 250,320", "820,770 850,720 920,710 900,760 890,820",
];

const network = [
  "975,98 968,145 975,175 960,200 935,215 905,245 870,260 835,225 825,180", "825,180 875,185 900,185 905,205 840,225", "1025,125 1050,125 1045,105",
  "1113,135 1120,140", "1075,172 1050,215 1040,245 1075,225 1075,250 1040,295 1015,335", "972,198 992,245 1040,295 1062,310 1100,300 1130,260 1140,200",
  "870,260 900,270 940,320 975,330 1015,335 1060,395 1100,405", "850,225 900,300 945,345 1000,350", "975,370 1015,335", "1015,370 980,430 980,475 975,510",
  "1030,500 1045,530 1045,572", "1010,572 985,545", "1045,572 1095,580", "805,445 860,465 880,455", "1040,300 1035,400 1080,400",
  "1150,118 1175,102 1195,165 1185,275 1170,340 1155,440", "1195,165 1150,210 1135,250 1110,300", "1202,68 1225,74",
  "1225,225 1210,245 1188,275 1225,285 1255,290 1280,287 1290,285", "1225,285 1242,345 1242,375 1278,372 1325,385 1295,425 1250,465 1220,515",
  "1242,345 1270,345 1278,372", "1270,330 1255,410 1240,400 1190,420", "1370,440 1350,438 1317,470 1285,490 1240,490 1220,515", "1295,425 1285,460",
  "1200,428 1158,412 1110,430", "1110,135 1120,145", "1100,240 1110,300 1160,340 1210,300",
];
const cores = [
  "880,240 940,215 1000,260 1040,300 1100,290 1140,215 1190,200 1195,290 1235,300 1250,360 1215,385 1185,370 1165,400 1200,440 1222,470 1218,515 1180,550 1165,590 1130,600 1090,580 1095,470 1075,420 1020,385 960,350 915,310",
  "1245,350 1290,380 1320,385 1295,430 1250,470 1235,450 1265,410",
];

function sample(s: string, gap: number, seed: number): P[] {
  const list = pts(s);
  const r = rng(seed);
  const out: P[] = [];
  for (let i = 1; i < list.length; i++) {
    const [x0, y0] = list[i - 1];
    const [x1, y1] = list[i];
    const n = Math.max(1, Math.round(Math.hypot(x1 - x0, y1 - y0) / gap));
    for (let k = 0; k <= n; k++) {
      if (r() < 0.3 && k !== n) continue;
      out.push([x0 + ((x1 - x0) * k) / n + (r() - 0.5) * 12, y0 + ((y1 - y0) * k) / n + (r() - 0.5) * 12]);
    }
  }
  return out;
}

function coreDots(): P[] {
  const r = rng(991);
  const poly = pts(cores[0]);
  const out: P[] = [];
  while (out.length < 150) {
    const p: P = [880 + r() * 370, 210 + Math.sqrt(r()) * 385];
    if (inside(p, poly)) out.push(p);
  }
  return out;
}

type Label = [number, number, string, "p" | "g" | "k"];
const labels: Label[] = [
  [160, 296, "ខេត្តប៉ៃលិន", "p"], [375, 212, "បាត់ដំបង", "k"], [388, 278, "ខេត្តបាត់ដំបង", "p"], [675, 112, "ខេត្តសៀមរាប", "p"], [583, 453, "ខេត្តពោធិ៍សាត់", "p"],
  [290, 526, "ដែនជំរក", "g"], [288, 551, "សត្វព្រៃ", "g"], [288, 575, "ភ្នំសំកុះ", "g"], [500, 634, "ឧទ្យានជាតិ", "g"], [500, 659, "ភ្នំក្រវាញ", "g"], [500, 684, "កណ្តាល", "g"],
  [703, 651, "ដែនជំរក", "g"], [703, 675, "សត្វព្រៃ", "g"], [703, 699, "ភ្នំឱរ៉ាល់", "g"], [473, 760, "ឧទ្យានជាតិ", "g"], [473, 785, "បូទុមសាគរ", "g"], [292, 783, "ក្រុងខេមរភូមិន្ទ", "k"],
  [420, 866, "ខេត្តកោះកុង", "p"], [784, 793, "ខេត្តកំពង់ស្ពឺ", "p"], [887, 566, "ខេត្តកំពង់ឆ្នាំង", "p"], [945, 537, "ក្រុងកំពង់ឆ្នាំង", "k"], [82, 613, "អាវកណ្តាល", "p"], [1070, 150, "ដែនជំរក", "g"],
  [1298, 153, "ដែនជម្រកសត្វព្រៃ", "g"], [1298, 182, "ព្រៃឡង់", "g"], [1768, 106, "ដែនជំរក", "g"], [1768, 131, "សត្វព្រៃ", "g"], [1768, 155, "លំផាត់", "g"],
  [1920, 234, "ដែនជម្រកសត្វព្រៃ", "g"], [1920, 259, "ស្រែពក", "g"], [1745, 492, "ដែនជម្រកសត្វព្រៃ", "g"], [1745, 518, "កែវសីមា", "g"], [1828, 348, "ខេត្តមណ្ឌលគិរី", "p"],
  [1895, 460, "ក្រុងសែនមនោរម្យ", "k"], [1467, 375, "ខេត្តក្រចេះ", "p"], [1450, 446, "ក្រុងក្រចេះ", "k"], [1378, 654, "ខេត្តត្បូងឃ្មុំ", "p"], [1240, 636, "ក្រុងកំពង់ចាម", "k"], [1240, 876, "ខេត្តព្រៃវែង", "p"],
];
const latin: Label[] = [
  [2108, 520, "Tỉnh Đắk", "p"], [2108, 546, "Nông", "p"], [1792, 701, "Tỉnh Bình", "p"], [1792, 728, "Phước", "p"], [1487, 865, "Tỉnh Tây", "p"], [1487, 890, "Ninh", "p"],
  [2092, 638, "GiaNghĩa", "k"], [1789, 815, "Đồng Xoài", "k"], [2133, 811, "Bảo Lộc", "k"], [2211, 714, "Tỉnh", "p"], [2222, 741, "Đồ", "p"],
];
const ink = { p: "#8d6a9c", g: "#3f9a4c", k: "#333" };

function MapView() {
  const dots = [...network.flatMap((n, i) => sample(n, 25, i * 17 + 5)), ...coreDots()];
  const lines = (list: string[], c: string, w: number, amp: number, dx = 0) => (
    <g stroke={c} strokeWidth={w} fill="none" transform={`translate(${dx} 0)`} strokeLinejoin="round">
      {list.map((l, i) => <path key={i} d={wobble(l, amp, i + 3)} />)}
    </g>
  );
  return (
    <svg width="739" height="286" viewBox="24 39 2217 858" preserveAspectRatio="none" className="shrink-0 bg-[#f2efe9]">
      <path d={wobble("395,130 460,110 480,72 510,75 560,110 620,130 690,140 740,180 790,215 830,285 900,340 975,410 975,450 950,480 930,450 880,430 820,440 760,415 720,380 650,345 590,310 560,300 500,240 470,190 400,150", 4, 1, 12, true)} fill="#d6edbe" />
      <g fill="#bddab1">
        {parks.map((p, i) => <path key={i} d={wobble(p, 7, i + 20, 10, true)} />)}
        <g transform="translate(1110 0)">{parksB.map((p, i) => <path key={i} d={wobble(p, 6, i + 60, 10, true)} />)}</g>
      </g>
      <g fill="#f0eee6">
        <path d={wobble("500,740 530,705 540,760 515,790", 5, 4, 8, true)} />
        <path d={wobble("555,830 600,790 615,860 590,897 560,880", 6, 4, 8, true)} />
        <path d={wobble("330,500 380,480 400,500 350,545 320,530", 6, 4, 8, true)} />
      </g>
      <path d="M1220,720h60l20,60-40,10-50-20zM1150,850l30-40 10,80-30,8zM1680,85l60-10 10,30-50,5z" fill="#eef3cf" />
      <path d={wobble("15,555 60,570 100,552 130,575 190,580 212,640 235,690 262,740 265,800 290,850 320,905 15,905", 3, 9, 10, true)} fill="#aad3df" />
      <g fill="#bddab1">
        <path d={wobble("23,580 60,590 90,640 70,650 30,620", 4, 3, 8, true)} />
        <path d={wobble("125,735 145,750 140,795 125,780", 3, 3, 8, true)} />
        <path d={wobble("290,850 310,860 320,897 290,897", 3, 3, 8, true)} />
      </g>
      <g stroke="#7f9fe8" strokeWidth="2" strokeDasharray="6 4" fill="none"><path d="M135,560l5,90-10,60 20,60M90,640l20,70 40-20M70,650l10,50" /></g>
      {lines(blues, "#a9cfe0", 2.6, 7)}
      {lines(bluesB, "#a9cfe0", 2.6, 7, 1110)}
      <path d={wobble("1510,785 1535,835 1590,820 1600,850 1570,890 1540,880", 6, 5, 9, true)} fill="#aad3df" />
      <path d={wobble("1825,680 1870,690 1880,710 1850,720", 6, 5, 9, true)} fill="#aad3df" />
      {lines(greens, "#9dcb9f", 2.4, 5)}
      {lines(greensB, "#92cba2", 2.6, 5, 1110)}
      {lines(purples, "#b7a3c0", 2.6, 3)}
      {lines(purplesB, "#b7a3c0", 2.8, 4, 1110)}
      {lines(oranges, "#f6c68c", 3, 4)}
      {lines(orangesB, "#f6c68c", 3, 4, 1110)}
      {lines(reds, "#f4a48e", 3.2, 3)}
      {lines(redsB, "#f4a48e", 3.2, 3, 1110)}
      {lines(["395,270 400,300 480,350 560,380 650,425 700,480 760,520 830,565 880,610 920,700", "215,627 330,630 380,650", "305,40 310,105 330,160"], "#a5948f", 3, 1)}
      {lines(["45,40 58,130 80,200 115,250 108,300 122,340 120,380 175,410 215,470 195,490 192,590 215,640 230,680 265,720 262,770"], "#a08aa4", 7, 3)}
      {lines(["23,790 80,850 155,876 265,780", "155,876 158,897"], "#8f8ab0", 4, 1)}
      {lines(["635,600 615,640 500,640 505,755 440,745 345,720 330,760 265,770 290,810 288,897", "505,755 515,800"], "#a892ac", 7, 3, 1110)}
      {lines(["950,40 955,120 905,240 905,290 930,330 940,400 930,490 880,545 840,505 770,520 700,605 635,600"], "#948a97", 6.5, 3, 1110)}

      <path d={wobble("565,153 610,155 680,175 705,205 735,270 762,330 768,350 830,342 858,365 855,395 830,430 790,415 760,405 735,370 722,325 685,325 640,295 605,275 592,235 570,210", 2, 2, 12, true)} fill="#f5a4b1" stroke="#333" strokeWidth="3" />
      <path d={wobble("570,212 592,235 605,275 640,295 685,325 722,322", 6, 5, 6)} fill="none" stroke="#333" strokeWidth="3" />
      <g fill="#f5a4b1" stroke="#333" strokeWidth="2">
        <path d="M785,315l15-10 8,20-8,8-12-5zM278,215l10-4 5,12-8,12-7-8zM664,752l14-6 4,8-12,8z" />
        <path d={wobble("1535,42 1580,48 1610,65 1632,88 1625,98 1600,85 1575,62 1540,55", 6, 5, 6, true)} />
      </g>
      <g fill="none" stroke="#1f1f1f" strokeLinejoin="round">
        {["245,130 250,155 240,170 235,190", "262,330 285,370 270,410", "365,580 375,600 360,630", "350,655 340,680", "245,680 280,730 330,740", "280,735 285,780 300,800 340,840 395,870 405,890", "395,860 410,830 450,825", "415,745 405,770", "655,420 648,435", "290,760 350,800 350,830 310,830"].map((l, i) => (
          <path key={i} d={wobble(l, 5, i, 7)} strokeWidth={i === 5 ? 7 : 4} />
        ))}
        {["830,415 860,430 900,440 930,490 960,550 990,575", "840,425 900,470 940,520", "860,430 910,435 940,480 935,520", "975,575 980,620 990,680 1000,740 1010,800 1040,897", "1110,670 1070,690 1045,740 1035,800", "1000,575 1020,600 1025,650", "820,838 900,830 1010,835", "1030,800 1080,800 1140,850", "1100,690 1150,680 1140,640", "985,720 960,745 955,790", "1020,780 1060,830 1050,897", "1060,800 1100,860 1090,897", "1000,830 1040,850 1100,840", "1070,740 1085,790 1070,850"].map((l, i) => (
          <path key={i} d={wobble(l, 6, i + 40, 7)} strokeWidth={i === 0 || i === 3 ? 6 : 3.5} />
        ))}
        <path d={wobble("880,435 915,455 940,500 965,545 1000,570", 4, 8, 8)} stroke="#d98f9a" strokeWidth="4" />
        {["1650,40 1675,80 1720,75 1755,85 1770,65 1810,60 1830,90 1855,130 1890,125 1920,115 1960,140 2010,125 2050,135 2090,150 2140,170 2155,150", "1963,140 1970,190 2000,230 2030,260 2070,260 2100,283", "1335,815 1340,840 1380,855 1405,840 1395,800", "1110,750 1130,700 1190,680", "1295,725 1320,755"].map((l, i) => (
          <path key={i} d={wobble(l, 4, i + 70, 9)} strokeWidth={i === 0 ? 5 : 4} />
        ))}
        {["1435,40 1415,70 1425,120 1420,160 1455,190 1465,230 1440,280 1420,320 1440,370 1450,430 1462,480 1445,525 1380,535 1320,525 1280,518 1265,560 1260,600 1235,650 1200,660 1130,650 1110,670", "1405,40 1390,100 1430,150 1445,190 1435,240 1410,320"].map((l, i) => (
          <g key={i}>
            <path d={wobble(l, 4, i + 95, 9)} strokeWidth="3.500" />
            <path d={wobble(l, 4, i + 80, 9)} strokeWidth={i ? 5 : 12} />
            <path d={wobble(l, 4, i + 80, 9)} strokeWidth={i ? 0 : 5.500} stroke="#d98f9a" />
          </g>
        ))}
        <path d={wobble("1070,690 1050,740 1090,760 1120,790", 4, 3, 9)} stroke="#d98f9a" strokeWidth="5" />
        {["1110,800 1150,850 1165,890", "1170,780 1175,850 1165,890", "1210,830 1195,890"].map((l, i) => <path key={i} d={wobble(l, 5, i, 7)} strokeWidth="6" />)}
      </g>
      <g fill="#222">
        <path d={scatter(620, 80, 110, 55, 130, 3, 5)} />
        <path d={scatter(1030, 800, 100, 90, 420, 5, 5)} />
        <path d={scatter(960, 760, 45, 90, 170, 6, 2)} />
        <path d={scatter(1070, 860, 90, 60, 260, 8, 6)} />
        <path d={scatter(1100, 780, 120, 90, 120, 21, 5)} />
        <path d={scatter(1340, 700, 70, 60, 40, 9, 4)} />
        <path d={scatter(1230, 630, 70, 50, 60, 11, 6)} />
        <path d={scatter(1450, 460, 45, 50, 40, 12, 5)} />
        <path d={scatter(1100, 460, 1050, 400, 110, 13, 4)} />
        <path d={scatter(320, 815, 45, 45, 50, 14, 7)} />
        <path d={scatter(980, 560, 50, 50, 60, 15, 6)} />
      </g>
      <g fontSize="22.500" textAnchor="middle" stroke="#f8f5ef" strokeWidth="3" paintOrder="stroke" fontFamily="'Noto Sans Khmer','Khmer OS','Noto Sans',sans-serif">
        {labels.map(([x, y, t, k], i) => <text key={i} x={x} y={y} fill={ink[k]}>{t}</text>)}
      </g>
      <g fontSize="24" textAnchor="middle" stroke="#f8f5ef" strokeWidth="3" paintOrder="stroke" fontFamily="'Noto Sans',sans-serif">
        {latin.map(([x, y, t, k], i) => <text key={i} x={x} y={y} fill={ink[k]} fontStyle={k === "p" ? "italic" : "normal"}>{t}</text>)}
      </g>
      {cores.map((c, i) => <path key={i} d={wobble(c, 5, i, 20, true)} fill="#1d2a1f" stroke="#1d2a1f" strokeWidth="12" strokeLinejoin="round" />)}
      <g stroke="#1d2a1f" strokeWidth="34" fill="none" strokeLinecap="round" strokeLinejoin="round">
        {network.map((n, i) => <path key={i} d={wobble(n, 4, i, 20)} />)}
      </g>
      <g fill="#e9e7df">
        <path d={wobble("1045,345 1060,350 1055,375 1042,365", 2, 2, 8, true)} />
        <path d={wobble("1195,380 1225,362 1232,375 1200,392", 2, 2, 8, true)} />
        <path d={wobble("1135,275 1150,262 1155,290 1142,298", 2, 2, 8, true)} />
      </g>
      <g fill="#118000" stroke="#123a0f" strokeWidth="1.800">
        {dots.map(([x, y], i) => <circle key={i} cx={x.toFixed(1)} cy={y.toFixed(1)} r="9.500" />)}
      </g>
      <defs><linearGradient id="fade" x1="0" y1="0" x2="0" y2="1"><stop offset="0" stopColor="#000" stopOpacity=".28" /><stop offset="1" stopColor="#000" stopOpacity="0" /></linearGradient></defs>
      <rect x="24" y="39" width="2217" height="34" fill="url(#fade)" />
    </svg>
  );
}

/* ---------- dialog ---------- */

const More = () => (
  <div className="flex h-[22px] w-[24px] shrink-0 items-end justify-end border border-[#232323] bg-linear-to-b from-[#555] to-[#454545] pb-[3px] pr-[3px] text-[10px] leading-[12px] text-[#c4c4c4]">
    <span className="-mr-[2px] mb-[1px]">...</span>
    <svg width="8" height="6" className="mb-px"><path d="M0 0h8L4 5z" fill="#888" /></svg>
  </div>
);

function Dialog() {
  const help = [
    "This algorithm attempts to create a valid", "representation of a given invalid geometry", "without losing any of the input vertices. Already-",
    "valid geometries are returned without further", "intervention. Always outputs multi-geometry", "layer.",
  ];
  const btn = "flex h-[23px] items-center justify-center border border-[#222] pt-[2px] ";
  return (
    <div className="absolute left-[361px] top-[100px] h-[443px] w-[844px] bg-[#323232] text-[11px] tracking-[-0.3px] text-[#b8b8b8] shadow-[0_3px_14px_rgba(0,0,0,0.55)]">
      <div className="flex h-[30px] items-center bg-white pl-[8px] pr-[9px] text-[12px] tracking-[-0.42px] text-black">
        <QLogo s={16} />
        <span className="grow pl-[5px]">Fix Geometries</span>
        <svg width="12" height="12" viewBox="0 0 12 12" className="-mt-[2px]"><path d="M1 1l10 10M11 1L1 11" stroke="#111" strokeWidth="1.200" /></svg>
      </div>
      <div className="flex h-[321px] px-[11px] pt-[11px]">
        <div className="flex w-[550px] shrink-0 flex-col">
          <div className="flex h-[23px] items-end">
            <div className="z-10 -mb-px flex h-[24px] w-[89px] items-center justify-center border border-b-0 border-[#5a5a5a] bg-[#323232] pr-[2px] pt-[2px] tracking-[-0.2px]">Parameters</div>
            <div className="-ml-px flex h-[17px] w-[51px] items-center justify-center border border-b-0 border-[#5a5a5a] pr-[2px] pt-[2px]">Log</div>
          </div>
          <div className="flex grow flex-col border border-[#5a5a5a] pl-[4px]">
            <div className="h-[23px] leading-[21px] tracking-[-0.2px]">Input layer</div>
            <div className="flex h-[24px] items-start">
              <div className="flex h-[24px] w-[438px] items-center border border-[#1c1c1c] bg-linear-to-b from-[#565656] to-[#464646] pl-[4px] pr-[5px]">
                <svg width="16" height="12" viewBox="0 0 16 12"><path d="M1 2c0-2 4-1 6 0s8-3 8 0v6c0 3-4 1-6 1s-3 3-6 2-1-6-2-9z" fill="#e2e2e2" /></svg>
                <span className="grow pl-[5px] pt-[2px] tracking-[-0.24px]">cambodia_water_river [EPSG:4326]</span>
                <svg width="6" height="6"><path d="M0 0h6L3 6z" fill="#c4c4c4" /></svg>
              </div>
              <div className="ml-[11px] flex w-[20px] justify-center pt-[3px]">
                <Svg s={19}><path d="M9 5H5.500C4 5 3 6 3 7.500v9C3 18 4 19 5.500 19H7M15 19h3.500c1.500 0 2.500-1 2.500-2.500v-9C21 6 20 5 18.500 5H17" stroke="#7cba7f" strokeWidth="3" /><path d="M17 0l-6 5 6 5zM8 24l6-5-6-5z" fill="#7cba7f" /></Svg>
              </div>
              <div className="ml-[16px] pt-[3px]"><Wrench s={19} /></div>
              <div className="ml-[12px]"><More /></div>
            </div>
            <div className="mt-[9px] flex h-[16px] items-center pl-px text-[#575757]">
              <div className="h-[16px] w-[16px] border border-[#5a5a5a]" />
              <span className="pl-[6px] pt-[2px] tracking-[-0.22px]">Selected features only</span>
            </div>
            <div className="mt-[2px] h-[24px] leading-[23px] tracking-[-0.38px]">Fixed geometries</div>
            <div className="flex h-[22px]">
              <div className="mr-[6px] flex w-[510px] items-center border border-[#1a1a1a] bg-[#888] pl-[4px] pt-[2px] text-[#555]">[Create temporary layer]</div>
              <More />
            </div>
            <div className="mt-[7px] flex h-[16px] items-center pl-px">
              <div className="h-[16px] w-[16px] bg-[#116f00]" />
              <span className="pl-[6px] pt-[2px] tracking-[-0.39px]">Open output file after running algorithm</span>
            </div>
          </div>
        </div>
        <div className="w-[16px] shrink-0 pl-[4px] pt-[3px]"><svg width="4" height="6"><path d="M4 0v6L0 3z" fill="#888" /></svg></div>
        <div className="w-[256px] shrink-0 border border-[#5a5a5a] bg-[#222] pl-[5px] text-[11px] leading-[13px] tracking-[-0.2px] text-[#6a6a6a]">
          <div className="h-[39px] pl-px pt-[9px] text-[17px] font-bold leading-[16px] tracking-[0.05px] text-[#565656]">Fix geometries</div>
          {help.map((l, i) => <div key={l} className={i === 3 ? "whitespace-nowrap tracking-[-0.26px]" : "whitespace-nowrap"}>{l}</div>)}
          <div className="mt-[12px] whitespace-nowrap tracking-[-0.36px]">NOTE: M values will be dropped from the output.</div>
        </div>
      </div>
      <div className="mt-[25px] flex items-center justify-between px-[11px]">
        <div className="flex h-[26px] w-[774px] items-center justify-center border border-[#5a5a5a] pt-[2px]">0%</div>
        <div className={btn + "w-[42px] tracking-[-0.1px] text-[#575757]"}>Cancel</div>
      </div>
      <div className="mt-[7px] flex gap-[6px] px-[11px]">
        <div className={btn + "w-[122px] pr-[2px] tracking-[-0.25px]"}>Run as Batch Process…</div>
        <div className="grow" />
        <div className={btn + "w-[29px] pr-px"}>Run</div>
        <div className={btn + "w-[36px] pr-px"}>Close</div>
        <div className={btn + "w-[31px] pr-px"}>Help</div>
      </div>
      <div className="absolute left-[532px] top-[185px] z-20 flex h-[154px] w-[233px] flex-col border border-[#1f1f1f] bg-[#323232] px-[4px] pt-[4px] text-[12px] tracking-[-0.48px] text-[#b8b8b8] shadow-[3px_3px_4px_rgba(0,0,0,0.6)]">
        <div className="flex h-[23px] items-center pl-[25px]">Create Temporary Layer</div>
        <div className="flex h-[23px] items-center bg-[#116f00] pl-[25px] tracking-[-0.28px]">Save to File...</div>
        <div className="flex h-[23px] items-center pl-[25px] tracking-[-0.36px]">Save to GeoPackage...</div>
        <div className="flex h-[23px] items-center pl-[25px]">Save to Database Table...</div>
        <div className="mb-px ml-[10px] mr-[5px] mt-[2px] h-px bg-[#5a5a5a]" />
        <div className="flex h-[23px] items-center pl-[25px] tracking-[-0.3px]">Append to Layer...</div>
        <div className="mb-px ml-[10px] mr-[5px] mt-px h-px bg-[#5a5a5a]" />
        <div className="flex h-[23px] items-center pl-[25px] tracking-[-0.2px]">Change File Encoding (System)...</div>
      </div>
    </div>
  );
}

/* ---------- status bar ---------- */

const Spin = () => (
  <svg width="7" height="12" viewBox="0 0 7 12"><path d="M0 5h7L3.500 0zM0 7h7l-3.500 5z" fill="#bbb" /></svg>
);

function StatusBar() {
  const box = "flex h-[22px] items-center border border-[#222] bg-linear-to-b from-[#4e4e4e] to-[#464646] pl-[4px] pr-[5px] ";
  return (
    <div className="flex h-[29px] shrink-0 items-start pt-[4px] text-[11.500px] tracking-[-0.4px] text-[#b0b0b0]">
      <div className="flex h-[22px] w-[199px] shrink-0 items-center border border-l-0 border-[#111] bg-[#888] pl-[8px] text-[#4c4c4c]">
        <Search s={13} />
        <span className="pl-[8px] pt-px tracking-[-0.32px]">Type to locate (Ctrl+K)</span>
      </div>
      <span className="w-[581px] shrink-0 pl-[10px] leading-[24px] tracking-[-0.62px] text-[#565656]">1 legend entries removed.</span>
      <span className="w-[56px] shrink-0 leading-[24px] tracking-[-0.55px]">Coordinate</span>
      <div className="flex h-[22px] w-[93px] shrink-0 items-center border border-[#111] bg-[#888] pl-[6px] pt-px tracking-[-0.25px] text-[#1c1c1c]">107.964,11.355</div>
      <div className="ml-[5px] w-[28px] shrink-0 pt-[2px]"><Svg s={17}><path d="M2 2l6 9M10 1l1 9" stroke="#ddd" strokeWidth="3.500" strokeLinecap="round" /><path d="M2 2l6 9M10 1l1 9" stroke="#222" strokeWidth="1.200" /><path d="M5 13l5-4 8 4 1 5-4 5H9l-4-4z" fill="#ddd" /><path d="M7 14l3 2M12 12l4 3M9 18l5 2M14 17l2 1" stroke="#222" strokeWidth="1.600" /></Svg></div>
      <span className="w-[29px] shrink-0 leading-[24px]">Scale</span>
      <div className={box + "w-[98px] shrink-0 justify-between pt-px"}><span className="tracking-[-0.2px]">l:2784489</span><svg width="6" height="6"><path d="M0 0h6L3 6z" fill="#c4c4c4" /></svg></div>
      <div className="w-[33px] shrink-0 pl-[11px] pt-[3px]"><svg width="14" height="16" viewBox="0 0 14 16"><path d="M3 8V5c0-5 8-5 8 0v3" stroke="#999" strokeWidth="2" fill="none" /><rect x="1" y="7" width="12" height="8.500" rx="1" fill="#888" /></svg></div>
      <span className="w-[48px] shrink-0 leading-[24px] tracking-[-0.65px]">Magnifier</span>
      <div className={box + "w-[88px] shrink-0 justify-between"}><span className="pt-px">100%</span><Spin /></div>
      <span className="w-[59px] shrink-0 pl-[8px] leading-[24px] tracking-[-0.5px]">Rotation</span>
      <div className={box + "w-[84px] shrink-0 justify-between"}><span className="pt-px">0,0 °</span><Spin /></div>
      <div className="ml-[6px] mt-[3px] h-4 w-4 shrink-0 bg-[#116f00]" />
      <span className="w-[57px] shrink-0 pl-[6px] leading-[24px] tracking-[-0.5px]">Render</span>
      <div className="w-[18px] shrink-0 pt-[4px]"><Svg s={14}><circle cx="12" cy="12" r="11" fill="#8a8a8a" /><path d="M1 12h22M3 6h18M3 18h18M12 1c-7 6-7 16 0 22M12 1c7 6 7 16 0 22" stroke="#ccc" strokeWidth="1.300" /></Svg></div>
      <span className="w-[73px] shrink-0 leading-[24px]">EPSG:4326</span>
      <div className="pt-[3px]"><Svg s={16}><path d="M12 2c15 0 15 17 2 17l2 4-8-4C-3 18-3 2 12 2z" fill="#8c8c8c" /><path d="M5 10.500h3M10.500 10.500h3M16 10.500h3" stroke="#fff" strokeWidth="3" /></Svg></div>
    </div>
  );
}

export default function App() {
  return (
    <div className="relative flex h-[859px] w-[1595px] flex-col overflow-hidden bg-[#323232] font-['Open_Sans','Noto_Sans',sans-serif]">
      <div className="flex h-[23px] shrink-0 items-center bg-white text-[12px] tracking-[-0.4px] text-[#999]">
        <div className="-ml-[3px] -mt-[2px]"><QLogo s={16} /></div>
        <span className="grow pl-[5px]">*Untitled Project — QGIS</span>
        <svg width="110" height="14" viewBox="0 0 110 14" fill="none" stroke="#999" className="-mt-[3px] mr-[15px]">
          <path d="M4 7.500h10M50.500 5.500h6v6h-6zM52.500 5.500v-2h6v6h-2M96 3l9 9M105 3l-9 9" />
        </svg>
      </div>
      <div className="flex h-[23px] shrink-0 pl-[5px] text-[12px] leading-[21px] tracking-[-0.42px] text-[#b4b4b4]">
        {menus.map(([a, u, b, w], i) => (
          <div key={i} className={`shrink-0 whitespace-nowrap ${w}`}>
            {a}<span className="underline underline-offset-2">{u}</span>{b}
          </div>
        ))}
      </div>
      <RowOne />
      <RowTwo />
      <RowThree />
      <div className="flex h-[672px] shrink-0">
        <SideTools />
        <LayersDock />
        <div className="flex w-[753px] shrink-0 flex-col justify-end pb-px pl-[7px]">
          <MapView />
        </div>
        <ToolboxDock />
      </div>
      <StatusBar />
      <Dialog />
    </div>
  );
}
